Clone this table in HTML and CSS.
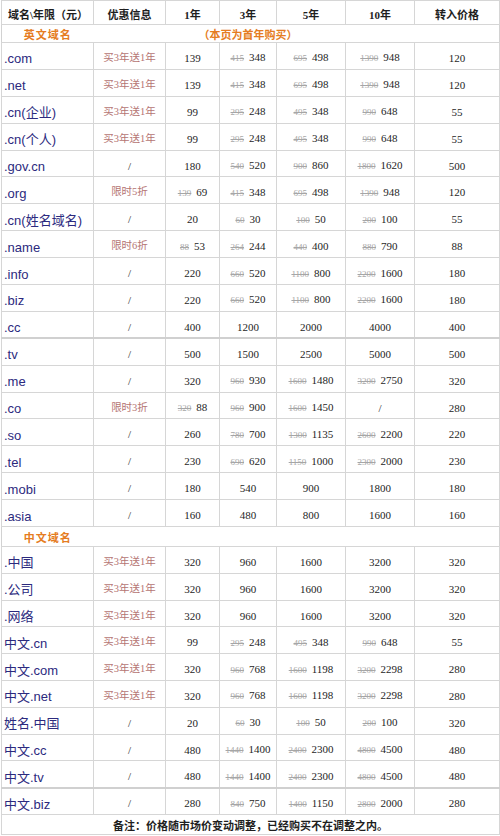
FILE: index.html
```html
<!DOCTYPE html>
<html lang="zh-CN">
<head>
<meta charset="utf-8">
<title>域名价格表</title>
<link rel="stylesheet" href="styles.css">
</head>
<body>
<table class="price">
<colgroup>
<col class="c-name"><col class="c-promo"><col class="c-y1"><col class="c-y3"><col class="c-y5"><col class="c-y10"><col class="c-in">
</colgroup>
<thead>
<tr class="head">
<th>域名\年限（元）</th><th>优惠信息</th><th>1年</th><th>3年</th><th>5年</th><th>10年</th><th>转入价格</th>
</tr>
</thead>
<tbody>
<tr class="sec sec1"><td class="sec-title">英文域名</td><td></td><td></td><td class="sec-note"><span>（本页为首年购买）</span></td><td></td><td></td><td></td></tr>
<tr><td class="dn">.com</td><td class="promo">买3年送1年</td><td>139</td><td><span class="old">415</span>348</td><td><span class="old">695</span>498</td><td><span class="old">1390</span>948</td><td>120</td></tr>
<tr><td class="dn">.net</td><td class="promo">买3年送1年</td><td>139</td><td><span class="old">415</span>348</td><td><span class="old">695</span>498</td><td><span class="old">1390</span>948</td><td>120</td></tr>
<tr><td class="dn">.cn(企业)</td><td class="promo">买3年送1年</td><td>99</td><td><span class="old">295</span>248</td><td><span class="old">495</span>348</td><td><span class="old">990</span>648</td><td>55</td></tr>
<tr><td class="dn">.cn(个人)</td><td class="promo">买3年送1年</td><td>99</td><td><span class="old">295</span>248</td><td><span class="old">495</span>348</td><td><span class="old">990</span>648</td><td>55</td></tr>
<tr><td class="dn">.gov.cn</td><td>/</td><td>180</td><td><span class="old">540</span>520</td><td><span class="old">900</span>860</td><td><span class="old">1800</span>1620</td><td>500</td></tr>
<tr><td class="dn">.org</td><td class="promo">限时5折</td><td><span class="old">139</span>69</td><td><span class="old">415</span>348</td><td><span class="old">695</span>498</td><td><span class="old">1390</span>948</td><td>120</td></tr>
<tr><td class="dn">.cn(姓名域名)</td><td>/</td><td>20</td><td><span class="old">60</span>30</td><td><span class="old">100</span>50</td><td><span class="old">200</span>100</td><td>55</td></tr>
<tr><td class="dn">.name</td><td class="promo">限时6折</td><td><span class="old">88</span>53</td><td><span class="old">264</span>244</td><td><span class="old">440</span>400</td><td><span class="old">880</span>790</td><td>88</td></tr>
<tr><td class="dn">.info</td><td>/</td><td>220</td><td><span class="old">660</span>520</td><td><span class="old">1100</span>800</td><td><span class="old">2200</span>1600</td><td>180</td></tr>
<tr><td class="dn">.biz</td><td>/</td><td>220</td><td><span class="old">660</span>520</td><td><span class="old">1100</span>800</td><td><span class="old">2200</span>1600</td><td>180</td></tr>
<tr class="thick"><td class="dn">.cc</td><td>/</td><td>400</td><td>1200</td><td>2000</td><td>4000</td><td>400</td></tr>
<tr><td class="dn">.tv</td><td>/</td><td>500</td><td>1500</td><td>2500</td><td>5000</td><td>500</td></tr>
<tr><td class="dn">.me</td><td>/</td><td>320</td><td><span class="old">960</span>930</td><td><span class="old">1600</span>1480</td><td><span class="old">3200</span>2750</td><td>320</td></tr>
<tr><td class="dn">.co</td><td class="promo">限时3折</td><td><span class="old">320</span>88</td><td><span class="old">960</span>900</td><td><span class="old">1600</span>1450</td><td>/</td><td>280</td></tr>
<tr><td class="dn">.so</td><td>/</td><td>260</td><td><span class="old">780</span>700</td><td><span class="old">1300</span>1135</td><td><span class="old">2600</span>2200</td><td>220</td></tr>
<tr><td class="dn">.tel</td><td>/</td><td>230</td><td><span class="old">690</span>620</td><td><span class="old">1150</span>1000</td><td><span class="old">2300</span>2000</td><td>230</td></tr>
<tr><td class="dn">.mobi</td><td>/</td><td>180</td><td>540</td><td>900</td><td>1800</td><td>180</td></tr>
<tr><td class="dn">.asia</td><td>/</td><td>160</td><td>480</td><td>800</td><td>1600</td><td>160</td></tr>
<tr class="sec sec2"><td class="sec-title">中文域名</td><td></td><td></td><td></td><td></td><td></td><td></td></tr>
<tr class="cn"><td class="dn">.中国</td><td class="promo">买3年送1年</td><td>320</td><td>960</td><td>1600</td><td>3200</td><td>320</td></tr>
<tr class="cn"><td class="dn">.公司</td><td class="promo">买3年送1年</td><td>320</td><td>960</td><td>1600</td><td>3200</td><td>320</td></tr>
<tr class="cn"><td class="dn">.网络</td><td class="promo">买3年送1年</td><td>320</td><td>960</td><td>1600</td><td>3200</td><td>320</td></tr>
<tr class="cn"><td class="dn">中文.cn</td><td class="promo">买3年送1年</td><td>99</td><td><span class="old">295</span>248</td><td><span class="old">495</span>348</td><td><span class="old">990</span>648</td><td>55</td></tr>
<tr class="cn"><td class="dn">中文.com</td><td class="promo">买3年送1年</td><td>320</td><td><span class="old">960</span>768</td><td><span class="old">1600</span>1198</td><td><span class="old">3200</span>2298</td><td>280</td></tr>
<tr class="cn"><td class="dn">中文.net</td><td class="promo">买3年送1年</td><td>320</td><td><span class="old">960</span>768</td><td><span class="old">1600</span>1198</td><td><span class="old">3200</span>2298</td><td>280</td></tr>
<tr class="cn"><td class="dn">姓名.中国</td><td>/</td><td>20</td><td><span class="old">60</span>30</td><td><span class="old">100</span>50</td><td><span class="old">200</span>100</td><td>320</td></tr>
<tr class="cn"><td class="dn">中文.cc</td><td>/</td><td>480</td><td><span class="old">1440</span>1400</td><td><span class="old">2400</span>2300</td><td><span class="old">4800</span>4500</td><td>480</td></tr>
<tr class="cn thick"><td class="dn">中文.tv</td><td>/</td><td>480</td><td><span class="old">1440</span>1400</td><td><span class="old">2400</span>2300</td><td><span class="old">4800</span>4500</td><td>480</td></tr>
<tr class="cn"><td class="dn">中文.biz</td><td>/</td><td>280</td><td><span class="old">840</span>750</td><td><span class="old">1400</span>1150</td><td><span class="old">2800</span>2000</td><td>280</td></tr>
</tbody>
<tfoot>
<tr class="foot"><td colspan="7">备注：价格随市场价变动调整，已经购买不在调整之内。</td></tr>
</tfoot>
</table>
</body>
</html>
```
FILE: styles.css
```css
html, body {
  margin: 0;
  padding: 0;
  background: #fff;
}

body {
  font-family: "Liberation Serif", "Noto Sans CJK SC", serif;
  color: #1e1e1e;
}

.price {
  margin-left: 1px;
  width: 498px;
  table-layout: fixed;
  border-collapse: collapse;
  border: 1px solid #d2d2d2;
}

.c-name { width: 92px; }
.c-promo { width: 72px; }
.c-y1 { width: 54px; }
.c-y3 { width: 57px; }
.c-y5 { width: 69px; }
.c-y10 { width: 69px; }
.c-in { width: 85px; }

.price th,
.price td {
  border: 1px solid #d6d6d6;
  padding: 4px 0 0 0;
  text-align: center;
  vertical-align: middle;
  white-space: nowrap;
  font-size: 11px;
  line-height: 14px;
}

.head th {
  height: 19px;
  font-weight: bold;
  font-size: 11px;
  font-family: "Liberation Serif", "Noto Sans CJK SC", serif;
}

.head th:first-child {
  text-align: left;
  padding-left: 6px;
}

tbody tr {
  height: 26.9px;
}

tbody tr.cn {
  height: 26.8px;
}

tr.sec td {
  border-left: none;
  border-right: none;
  color: #e57c22;
  font-weight: bold;
  font-size: 11px;
  padding-top: 2px;
  overflow: visible;
}

tr.sec td:first-child {
  border-left: 1px solid #d2d2d2;
}

tr.sec td:last-child {
  border-right: 1px solid #d2d2d2;
}

tr.sec1 {
  height: 18px;
}

tr.sec2 {
  height: 20px;
}

.sec-title {
  letter-spacing: 1px;
}

.sec-note span {
  display: inline-block;
  margin: 0 -40px;
}

tr.thick td {
  border-bottom: 2px solid #d0d0d0;
}

.price td.dn {
  text-align: left;
  padding-left: 2px;
  padding-top: 7px;
  font-family: "Liberation Sans", "Noto Sans CJK SC", sans-serif;
  font-size: 13px;
  color: #2c2a7e;
  overflow: hidden;
}

.price td.promo {
  color: #b57573;
  font-size: 10.5px;
}

.old {
  color: #a6a6a6;
  font-size: 9px;
  text-decoration: line-through;
  margin-right: 5px;
}

.foot td {
  height: 16px;
  text-align: center;
  font-weight: bold;
  font-size: 11px;
  padding-top: 3px;
}
```
